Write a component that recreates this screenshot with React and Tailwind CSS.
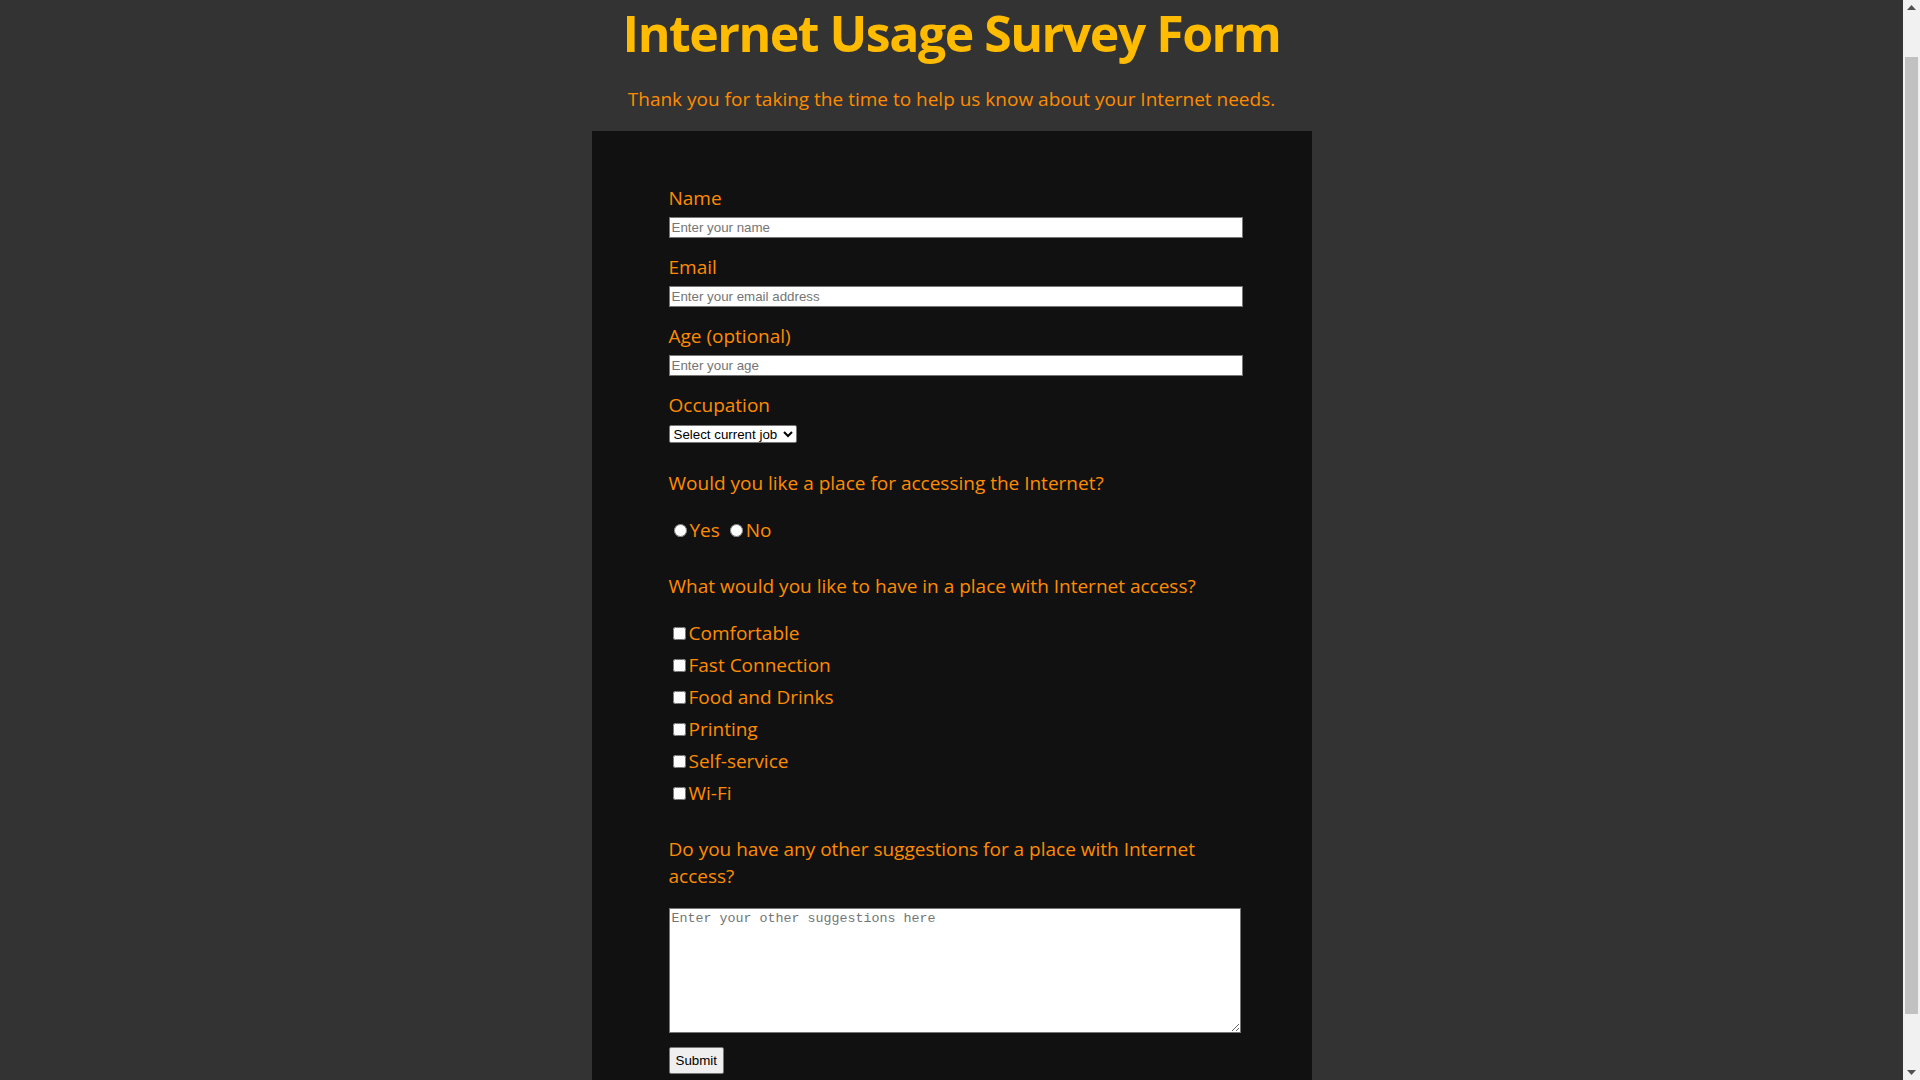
export default function App() {
  const amenities = [
    "Comfortable",
    "Fast Connection",
    "Food and Drinks",
    "Printing",
    "Self-service",
    "Wi-Fi",
  ];
  const inputCls =
    "mt-[6px] mb-[16px] block h-[21px] w-[574px] border border-[#767676] bg-white px-[2px] font-['Liberation_Sans',Arial,sans-serif] text-[13.33px] leading-normal text-black placeholder:text-[#757575]";
  return (
    <div className="min-h-screen bg-[#333333] pr-[17px] font-['Open_Sans',sans-serif] text-[#ff8c00]">
      <header className="pt-[3px] text-center">
        <h1 className="text-[50px] font-bold leading-[60px] tracking-[-1.5px] text-[#ffbb00]">
          Internet Usage Survey Form
        </h1>
        <p className="mt-[23px] text-[19px] leading-[26px]">
          Thank you for taking the time to help us know about your Internet needs.
        </p>
      </header>
      <form
        className="mx-auto mt-[19px] w-[720px] bg-[#111111] pb-[104px] pl-[77px] pr-[69px] pt-[54px] text-[19px] leading-[26px]"
        onSubmit={(e) => e.preventDefault()}
      >
        <label className="block" htmlFor="name">
          Name
        </label>
        <input id="name" type="text" placeholder="Enter your name" className={inputCls} />
        <label className="block" htmlFor="email">
          Email
        </label>
        <input id="email" type="email" placeholder="Enter your email address" className={inputCls} />
        <label className="block" htmlFor="age">
          Age (optional)
        </label>
        <input id="age" type="number" placeholder="Enter your age" className={inputCls} />
        <label className="block" htmlFor="job">
          Occupation
        </label>
        <select
          id="job"
          defaultValue=""
          className="mt-[7px] block h-[18px] w-[128px] rounded-[2px] border border-[#767676] bg-white font-['Liberation_Sans',Arial,sans-serif] text-[13.33px] leading-normal text-black"
        >
          <option value="" disabled>
            Select current job
          </option>
          <option value="student">Student</option>
          <option value="fulltime">Full Time Job</option>
          <option value="parttime">Part Time Job</option>
          <option value="other">Other</option>
        </select>

        <p className="mt-[27px]">Would you like a place for accessing the Internet?</p>
        <div className="mt-[21px]">
          <label>
            <input type="radio" name="place" value="yes" className="ml-[5px] mr-[3px] mt-[3px]" />
            Yes
          </label>{" "}
          <label>
            <input type="radio" name="place" value="no" className="ml-[5px] mr-[3px] mt-[3px]" />
            No
          </label>
        </div>

        <p className="mt-[30px]">What would you like to have in a place with Internet access?</p>
        <div className="mt-[21px] flex flex-col gap-[6px]">
          {amenities.map((a) => (
            <label key={a} className="block">
              <input type="checkbox" value={a} className="ml-[4px] mr-[3px]" />
              {a}
            </label>
          ))}
        </div>

        <p className="mt-[30px] w-[574px] leading-[27px]">
          Do you have any other suggestions for a place with Internet access?
        </p>
        <textarea
          placeholder="Enter your other suggestions here"
          className="mt-[18px] block h-[125px] w-[572px] border border-[#767676] bg-white px-[2px] pb-[2px] pt-0 font-['Liberation_Mono',monospace] text-[13.33px] leading-normal text-black placeholder:text-[#757575]"
        />
        <button
          type="submit"
          className="mt-[14px] block h-[27px] rounded-[2px] border border-[#767676] bg-[#efefef] px-[6px] font-['Liberation_Sans',Arial,sans-serif] text-[13.33px] leading-normal text-black"
        >
          Submit
        </button>
      </form>

      {/* browser scrollbar as it appears in the screenshot */}
      <div className="fixed right-0 top-0 h-screen w-[17px] bg-[#f1f1f1]">
        <svg className="absolute left-[4px] top-[5px]" width="9" height="5" viewBox="0 0 9 5">
          <path d="M4.5 0 L9 5 L0 5 Z" fill="#505050" />
        </svg>
        <div className="absolute left-[2px] top-[57px] h-[957px] w-[13px] bg-[#c1c1c1]" />
        <svg className="absolute bottom-[5px] left-[4px]" width="9" height="5" viewBox="0 0 9 5">
          <path d="M0 0 L9 0 L4.5 5 Z" fill="#505050" />
        </svg>
      </div>
    </div>
  );
}
